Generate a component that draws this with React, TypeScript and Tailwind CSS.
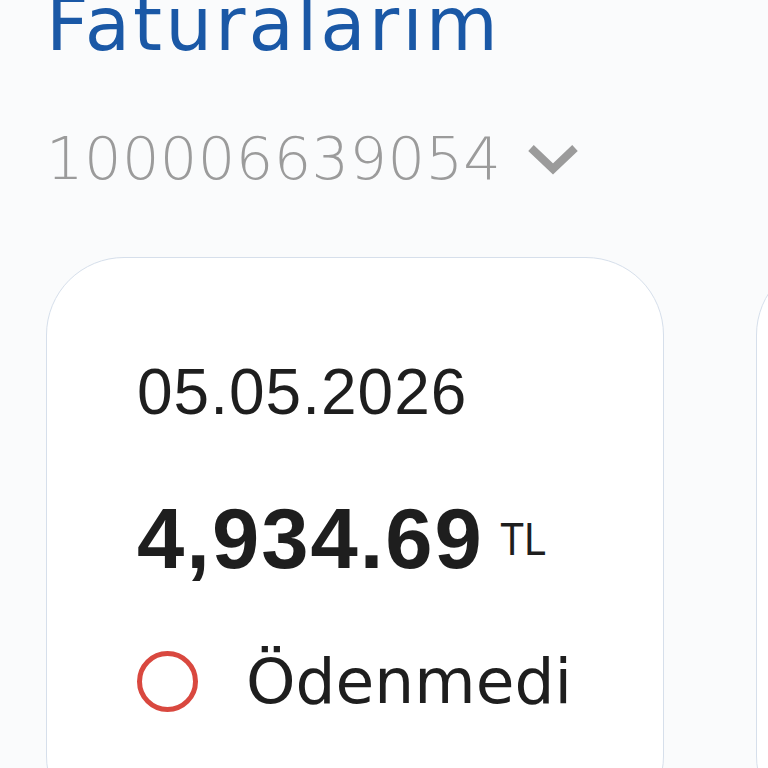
import { ReactNode } from 'react';

interface Invoice {
  date: string;
  amount: string;
  paid: boolean;
}

const invoices: Invoice[] = [
  { date: '05.05.2026', amount: '4,934.69', paid: false },
  { date: '05.04.2026', amount: '4,712.30', paid: true },
];

function Chevron() {
  return (
    <svg width="52" height="32" viewBox="0 0 52 32" fill="none" className="shrink-0">
      <path d="M4 5 L26 26 L48 5" stroke="#9b9b9b" strokeWidth="8" strokeLinecap="butt" />
    </svg>
  );
}

function Status({ paid }: { paid: boolean }): ReactNode {
  return (
    <div className="flex items-center gap-[48px]">
      <span
        className={
          paid
            ? 'w-[61px] h-[61px] rounded-full border-[5px] border-[#3a9b5c] shrink-0'
            : 'w-[61px] h-[61px] rounded-full border-[5px] border-[#d9483f] shrink-0'
        }
      />
      <span className="font-['DejaVu_Sans',sans-serif] text-[63px] leading-none text-[#1e1e1e]">
        {paid ? 'Ödendi' : 'Ödenmedi'}
      </span>
    </div>
  );
}

function InvoiceCard({ date, amount, paid }: Invoice) {
  return (
    <div className="w-[618px] shrink-0 bg-white rounded-[78px] border border-[#d6dfeb] pl-[90px] pt-[102px] pb-[120px]">
      <p className="font-['Liberation_Sans',Arial,sans-serif] text-[64px] leading-none tracking-[1px] text-[#1e1e1e]">
        {date}
      </p>
      <div className="flex items-center gap-[16px] mt-[72px]">
        <span className="font-['Liberation_Sans',Arial,sans-serif] font-bold text-[85px] leading-none tracking-[2px] text-[#1e1e1e]">
          {amount}
        </span>
        <span className="inline-block origin-left scale-x-[0.86] font-['Liberation_Sans',Arial,sans-serif] text-[46px] leading-none text-[#1e1e1e]">
          TL
        </span>
      </div>
      <div className="mt-[69px]">
        <Status paid={paid} />
      </div>
    </div>
  );
}

export default function App() {
  return (
    <div className="w-[768px] h-[768px] overflow-hidden bg-[#fafbfc] pl-[46px]">
      <h1 className="mt-[-13px] font-['DejaVu_Sans',sans-serif] text-[74px] leading-none tracking-[3px] text-[#1a58a6]">
        Faturalarım
      </h1>
      <div className="flex items-center gap-[26px] mt-[68px]">
        <span className="font-['DejaVu_Sans',sans-serif] font-extralight text-[59px] leading-none tracking-[0.4px] text-[#9b9b9b]">
          100006639054
        </span>
        <Chevron />
      </div>
      <div className="flex gap-[92px] mt-[69px]">
        {invoices.map((inv) => (
          <InvoiceCard key={inv.date} {...inv} />
        ))}
      </div>
    </div>
  );
}
